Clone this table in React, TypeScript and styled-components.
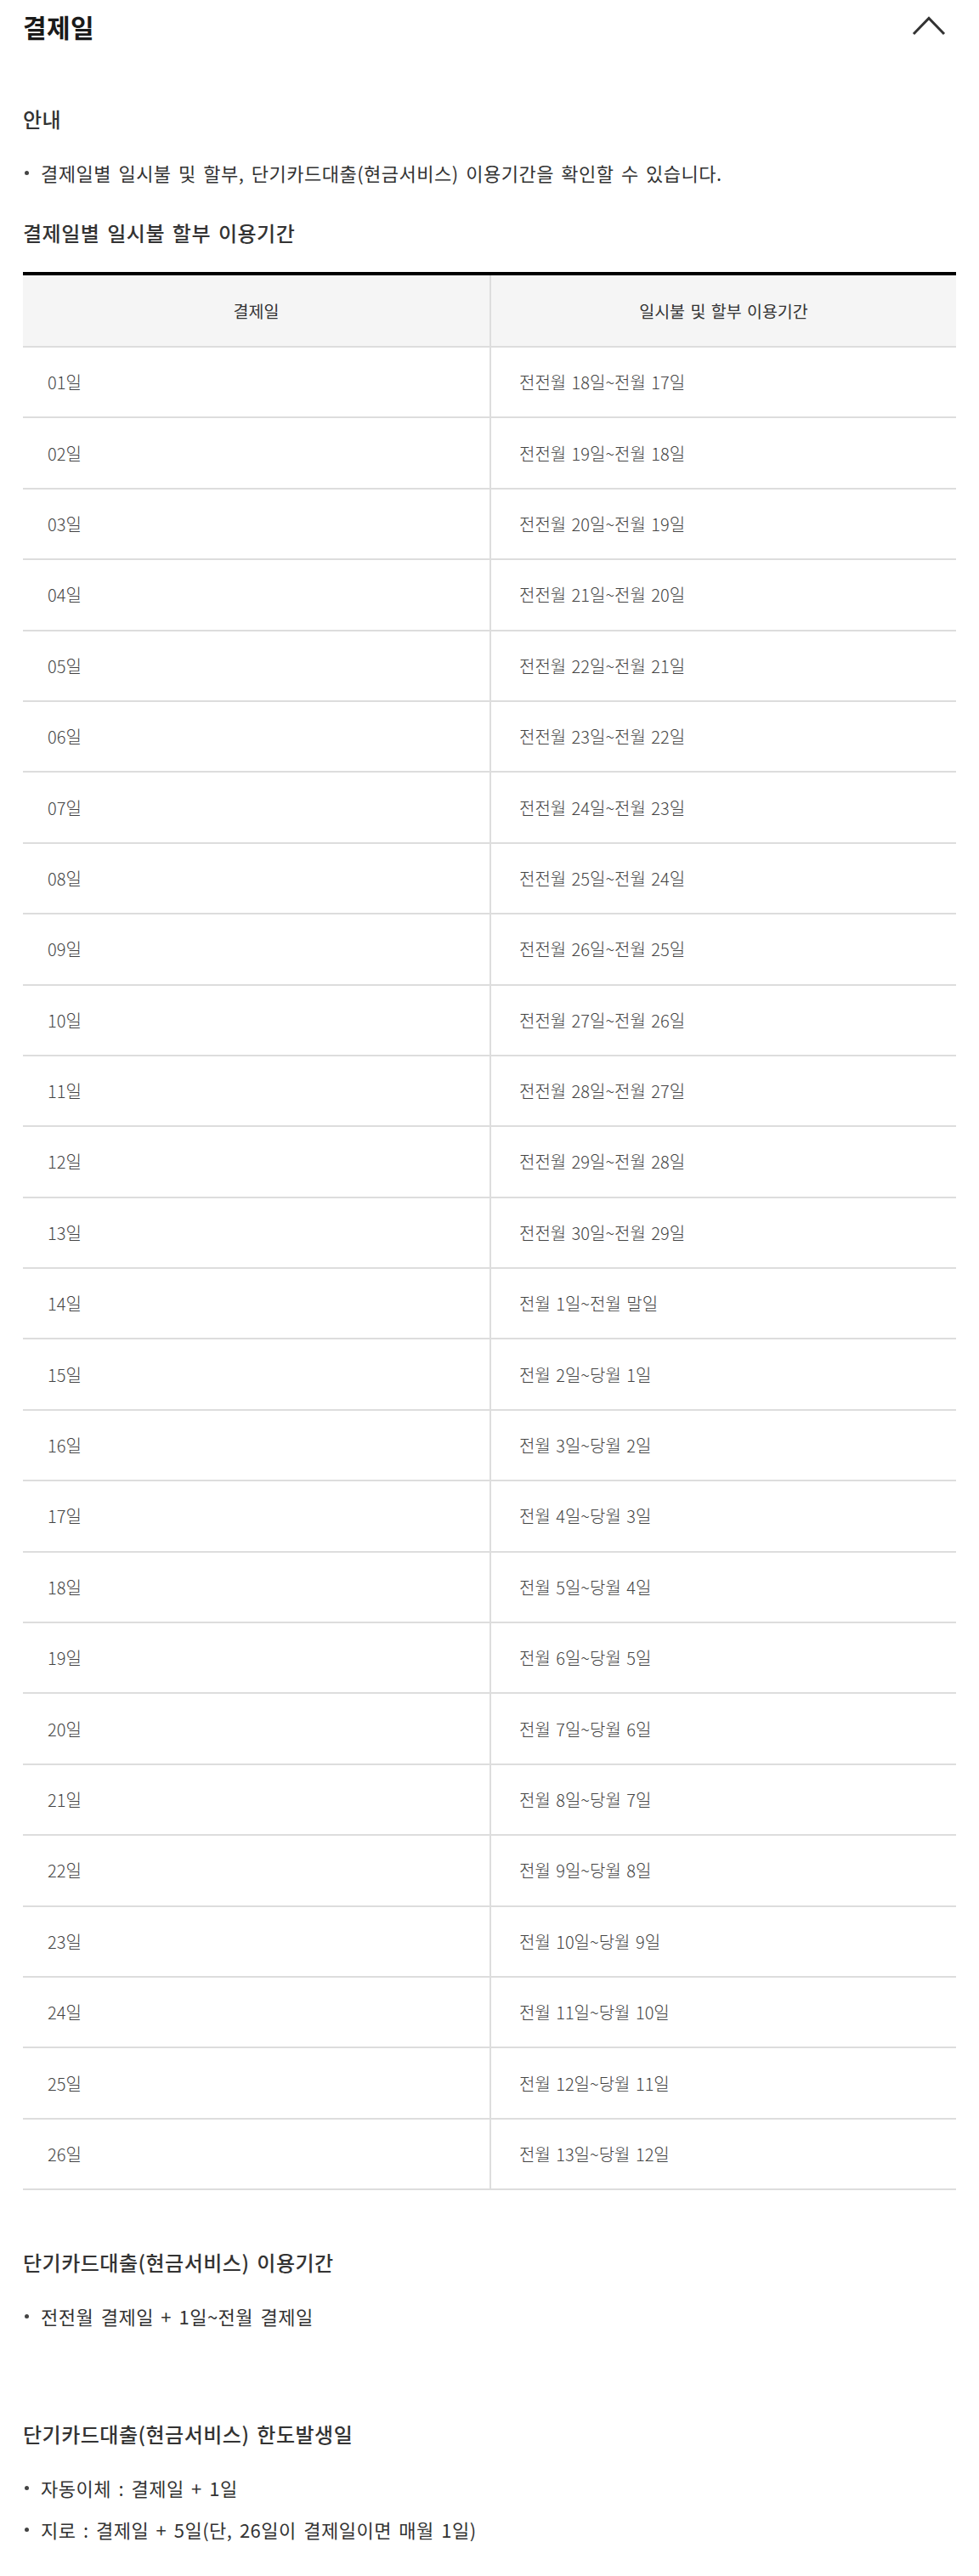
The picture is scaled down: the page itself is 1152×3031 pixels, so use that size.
import styled, { createGlobalStyle } from 'styled-components';

const GlobalStyle = createGlobalStyle`
    body {
        margin: 0;
        background: #fff;
        font-family: "Noto Sans CJK KR", "Noto Sans", sans-serif;
        color: #333;
    }
    * { box-sizing: border-box; }
`

const Page = styled.div`
    width: 1152px;
    padding: 0 27px 37px;
`

const TopBar = styled.div`
    display: flex;
    height: 62px;
    align-items: center;
    justify-content: space-between;
`

const Title = styled.h2`
    margin: 0;
    font-size: 30px;
    font-weight: 700;
    line-height: 62px;
    letter-spacing: 0.4px;
    color: #1a1a1a;
`

const Block = styled.section<{ $top: number }>`
    margin-top: ${p => p.$top}px;
`

const Heading = styled.h3<{ $space?: number }>`
    margin: 0 0 ${p => p.$space ?? 32}px;
    font-size: 24px;
    font-weight: 500;
    line-height: 32px;
    letter-spacing: 0.5px;
    word-spacing: 3px;
    color: #333;
`

const List = styled.ul`
    margin: 0;
    padding: 0;
    list-style: none;
    display: flex;
    flex-direction: column;
    gap: 19px;
`

const Item = styled.li`
    display: flex;
    align-items: center;
    font-size: 22px;
    line-height: 30px;
    color: #333;
    letter-spacing: 0.5px;
    word-spacing: 3px;
`

const Dot = styled.span`
    width: 5px;
    height: 5px;
    border-radius: 50%;
    background: #444;
    margin: 0 14px 0 2px;
    flex: none;
`

const Table = styled.div`
    border-top: 4px solid #000;
`

const Row = styled.div<{ $head?: boolean }>`
    display: grid;
    grid-template-columns: 549px 549px;
    height: ${p => (p.$head ? 85 : 83.4)}px;
    border-bottom: 2px solid #ddd;
    background: ${p => (p.$head ? '#f5f5f5' : '#fff')};
`

const Cell = styled.div<{ $head?: boolean; $second?: boolean }>`
    display: flex;
    align-items: center;
    justify-content: ${p => (p.$head ? 'center' : 'flex-start')};
    padding-left: ${p => (p.$head ? 0 : p.$second ? 33 : 29)}px;
    border-left: ${p => (p.$second ? '2px solid #ddd' : 'none')};
    font-size: ${p => (p.$head ? 19.5 : 20)}px;
    font-weight: ${p => (p.$head ? 400 : 300)};
    color: ${p => (p.$head ? '#333' : '#444')};
    word-spacing: 2px;
`

const periodOf = (d: number) => {
    if (d <= 13) return `전전월 ${d + 17}일~전월 ${d + 16}일`;
    if (d === 14) return '전월 1일~전월 말일';
    return `전월 ${d - 13}일~당월 ${d - 14}일`;
};

const days = Array.from({ length: 26 }, (_, i) => i + 1);

function ChevronUp() {
    return (
        <svg width="52" height="62" viewBox="0 0 52 62" fill="none">
            <path d="M2 40 L20 21.5 L38 40" stroke="#333" strokeWidth="3" />
        </svg>
    );
}

export default function App() {
    return (
        <Page>
            <GlobalStyle />
            <TopBar>
                <Title>결제일</Title>
                <ChevronUp />
            </TopBar>

            <Block $top={62}>
                <Heading>안내</Heading>
                <List>
                    <Item><Dot />결제일별 일시불 및 할부, 단기카드대출(현금서비스) 이용기간을 확인할 수 있습니다.</Item>
                </List>
            </Block>

            <Block $top={40}>
                <Heading $space={30}>결제일별 일시불 할부 이용기간</Heading>
                <Table>
                    <Row $head>
                        <Cell $head>결제일</Cell>
                        <Cell $head $second>일시불 및 할부 이용기간</Cell>
                    </Row>
                    {days.map(d => (
                        <Row key={d}>
                            <Cell>{String(d).padStart(2, '0')}일</Cell>
                            <Cell $second>{periodOf(d)}</Cell>
                        </Row>
                    ))}
                </Table>
            </Block>

            <Block $top={69}>
                <Heading>단기카드대출(현금서비스) 이용기간</Heading>
                <List>
                    <Item><Dot />전전월 결제일 + 1일~전월 결제일</Item>
                </List>
            </Block>

            <Block $top={108}>
                <Heading>단기카드대출(현금서비스) 한도발생일</Heading>
                <List>
                    <Item><Dot />자동이체 : 결제일 + 1일</Item>
                    <Item><Dot />지로 : 결제일 + 5일(단, 26일이 결제일이면 매월 1일)</Item>
                </List>
            </Block>
        </Page>
    );
}
